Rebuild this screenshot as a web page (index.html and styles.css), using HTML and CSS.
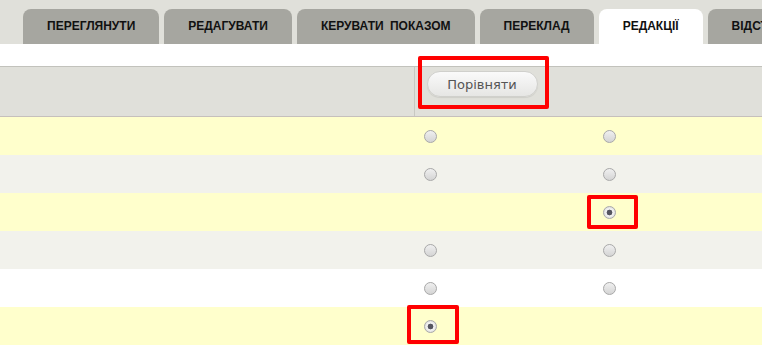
FILE: index.html
```html
<!DOCTYPE html>
<html lang="uk">
<head>
  <meta charset="UTF-8" />
  <meta name="viewport" content="width=device-width, initial-scale=1.0" />
  <title>Редакції</title>
  <link rel="stylesheet" href="styles.css">
</head>
<body>
  <div class="tabs">
    <a class="tab" href="#">Переглянути</a>
    <a class="tab" href="#">Редагувати</a>
    <a class="tab" href="#">Керувати показом</a>
    <a class="tab" href="#">Переклад</a>
    <a class="tab active" href="#">Редакції</a>
    <a class="tab" href="#">Відстеження</a>
  </div>

  <table class="revisions">
    <colgroup>
      <col class="col-info">
      <col class="col-left">
      <col class="col-right">
    </colgroup>
    <thead>
      <tr>
        <th></th>
        <th class="compare"><button class="btn">Порівняти</button></th>
        <th></th>
      </tr>
    </thead>
    <tbody>
      <tr class="odd">
        <td></td>
        <td><input type="radio" name="left"></td>
        <td><input type="radio" name="right"></td>
      </tr>
      <tr class="even">
        <td></td>
        <td><input type="radio" name="left"></td>
        <td><input type="radio" name="right"></td>
      </tr>
      <tr class="odd">
        <td></td>
        <td></td>
        <td><input type="radio" name="right" checked></td>
      </tr>
      <tr class="even">
        <td></td>
        <td><input type="radio" name="left"></td>
        <td><input type="radio" name="right"></td>
      </tr>
      <tr class="plain">
        <td></td>
        <td><input type="radio" name="left"></td>
        <td><input type="radio" name="right"></td>
      </tr>
      <tr class="odd">
        <td></td>
        <td><input type="radio" name="left" checked></td>
        <td></td>
      </tr>
    </tbody>
  </table>

  <!-- highlight marks over the screenshot -->
  <div class="mark mark-button"></div>
  <div class="mark mark-right"></div>
  <div class="mark mark-left"></div>
</body>
</html>
```

FILE: styles.css
```css
body {
  margin: 0;
  padding: 0;
  position: relative;
  overflow: hidden;
  background-color: #fff;
  font-family: "DejaVu Sans", sans-serif;
}

.tabs {
  display: flex;
  gap: 5px;
  height: 44px;
  padding: 9px 0 0 23px;
  box-sizing: border-box;
  background-color: #e0e0da;
  white-space: nowrap;
  overflow: hidden;
}

.tab {
  flex: none;
  display: block;
  height: 35px;
  line-height: 35px;
  padding: 0 24px;
  border-radius: 8px 8px 0 0;
  background-color: #a6a6a0;
  color: #111;
  font-family: "Liberation Sans", Arial, sans-serif;
  font-size: 12px;
  font-weight: bold;
  word-spacing: 3px;
  text-transform: uppercase;
  text-decoration: none;
}

.tab.active {
  background-color: #fff;
}

.revisions {
  width: 100%;
  margin-top: 22px;
  border-collapse: collapse;
  table-layout: fixed;
}

.col-info {
  width: 414px;
}

.col-left {
  width: 179px;
}

.revisions th {
  height: 50px;
  padding: 4px 10px 0;
  box-sizing: border-box;
  vertical-align: top;
  text-align: left;
  background-color: #e0e0da;
  border-top: 1px solid #c2c2bc;
  border-bottom: 1px solid #c6c0bc;
}

.revisions th.compare {
  border-left: 1px solid #c8c8c2;
  padding-left: 12px;
}

.btn {
  width: 111px;
  height: 26px;
  padding: 0;
  border: 1px solid #d0d0cc;
  border-radius: 13px;
  background: linear-gradient(#fafafa, #e6e6e4);
  box-shadow: 0 1px 1px rgba(0, 0, 0, 0.08);
  color: #555;
  font-family: "DejaVu Sans", sans-serif;
  font-size: 13px;
}

.revisions td {
  height: 38px;
  padding: 0 10px;
  vertical-align: middle;
  line-height: 0;
}

.revisions tr.odd td {
  background-color: #ffffcc;
}

.revisions tr.even td {
  background-color: #f2f2ec;
}

.revisions tr.plain td {
  background-color: #fff;
}

input[type="radio"] {
  appearance: none;
  -webkit-appearance: none;
  width: 13px;
  height: 13px;
  margin: 0;
  border: 1px solid #a9a9a9;
  border-radius: 50%;
  background: linear-gradient(#f0f0f0, #d4d4d4);
  box-sizing: border-box;
}

input[type="radio"]:checked {
  background: radial-gradient(circle, #555560 0 2.6px, #f6f6f6 3.2px, #dcdcdc 6px);
}

.mark {
  position: absolute;
  border: 4px solid #ff0000;
  border-radius: 2px;
  box-sizing: border-box;
}

.mark-button {
  left: 418px;
  top: 56px;
  width: 131px;
  height: 53px;
}

.mark-right {
  left: 587px;
  top: 195px;
  width: 51px;
  height: 34px;
}

.mark-left {
  left: 407px;
  top: 305px;
  width: 52px;
  height: 39px;
}
```
